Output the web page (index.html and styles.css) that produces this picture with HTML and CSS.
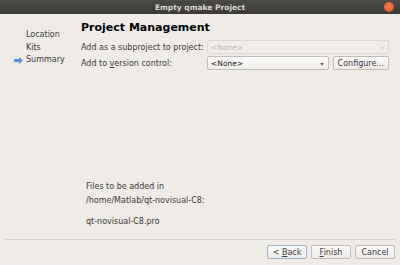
FILE: index.html
```html
<!DOCTYPE html>
<html>

<head>
    <meta charset="UTF-8">
    <title>Empty qmake Project</title>
    <link rel="stylesheet" href="styles.css">
</head>

<body>
    <div class="window">
        <div class="titlebar">
            <span></span>
            <span class="title">Empty qmake Project</span>
            <span class="close"></span>
        </div>

        <div class="main">
            <ul class="steps">
                <li>Location</li>
                <li>Kits</li>
                <li class="current">
                    <svg class="arrow" width="9" height="7" viewBox="0 0 9 7">
                        <path d="M0 2h5V0l4 3.5L5 7V5H0z" fill="#5b8fd6" />
                    </svg>
                    Summary
                </li>
            </ul>

            <div class="page">
                <h1>Project Management</h1>
                <div class="form">
                    <label>Add as a subproject to project:</label>
                    <div class="combo disabled"><span>&lt;None&gt;</span><span class="caret">&#9662;</span></div>

                    <label>Add to <u>v</u>ersion control:</label>
                    <div class="row">
                        <div class="combo"><span>&lt;None&gt;</span><span class="caret">&#9662;</span></div>
                        <button>Configure...</button>
                    </div>
                </div>

                <div class="files">
                    <p>Files to be added in</p>
                    <p>/home/Matlab/qt-novisual-C8:</p>
                    <p class="file">qt-novisual-C8.pro</p>
                </div>
            </div>
        </div>

        <div class="footer">
            <button>&lt; <u>B</u>ack</button>
            <button><u>F</u>inish</button>
            <button>Cancel</button>
        </div>
    </div>
</body>

</html>
```

FILE: styles.css
```css
body {
    margin: 0;
    font-family: "DejaVu Sans", sans-serif;
    font-size: 8px;
    color: #3c3c3c;
    background-color: #efebe7;
}

.window {
    width: 400px;
    height: 265px;
    display: flex;
    flex-direction: column;
}

.titlebar {
    height: 14px;
    display: grid;
    grid-template-columns: 1fr auto 1fr;
    align-items: center;
    background: linear-gradient(#4c4b46, #3a3935);
    color: #dcd8d0;
    font-weight: bold;
    font-size: 7.5px;
}

.titlebar .close {
    justify-self: end;
    width: 10px;
    height: 10px;
    margin-right: 6px;
    border-radius: 50%;
    background: radial-gradient(circle at 50% 40%, #f47a4a, #e0531f);
}

.main {
    flex: 1;
    display: flex;
}

.steps {
    list-style: none;
    margin: 0;
    padding: 15px 0 0 26px;
    width: 55px;
}

.steps li {
    height: 12.5px;
    line-height: 12.5px;
    position: relative;
}

.steps .arrow {
    position: absolute;
    left: -12px;
    top: 3px;
}

.page {
    flex: 1;
    display: flex;
    flex-direction: column;
    padding-right: 11px;
}

h1 {
    margin: 7px 0 5px 0;
    font-size: 11px;
    color: #000;
    line-height: 14px;
}

.form {
    display: grid;
    grid-template-columns: 126px 1fr;
    row-gap: 2px;
    align-items: center;
}

.row {
    display: flex;
    gap: 4px;
}

.combo {
    height: 14px;
    box-sizing: border-box;
    border: 1px solid #c2bdb6;
    border-radius: 2px;
    background: linear-gradient(#fbfaf9, #f1efec);
    display: flex;
    align-items: center;
    justify-content: space-between;
    padding: 0 4px 0 3px;
    font-size: 7.5px;
    color: #222;
    flex: 1;
}

.combo.disabled {
    background: #f1eeea;
    border-color: #dcd8d2;
    color: #bdb8b2;
}

.combo .caret {
    font-size: 6px;
    color: #555;
}

.combo.disabled .caret {
    color: #ccc;
}

button {
    font-family: inherit;
    font-size: 8px;
    color: #3c3c3c;
    height: 14px;
    padding: 0 4px;
    border: 1px solid #c2bdb6;
    border-radius: 2px;
    background: linear-gradient(#fbfaf9, #eeebe7);
}

.files {
    margin-top: auto;
    padding-left: 5px;
    padding-bottom: 10px;
}

.files p {
    margin: 0;
    line-height: 14px;
}

.files .file {
    margin-top: 7px;
}

.footer {
    margin: 0 5px;
    border-top: 1px solid #d6d2cc;
    padding: 5px 0 6px 0;
    display: flex;
    justify-content: flex-end;
    gap: 4px;
}

.footer button {
    width: 40px;
}

.footer button:first-child {
    border-color: #9fb4cf;
}
```
